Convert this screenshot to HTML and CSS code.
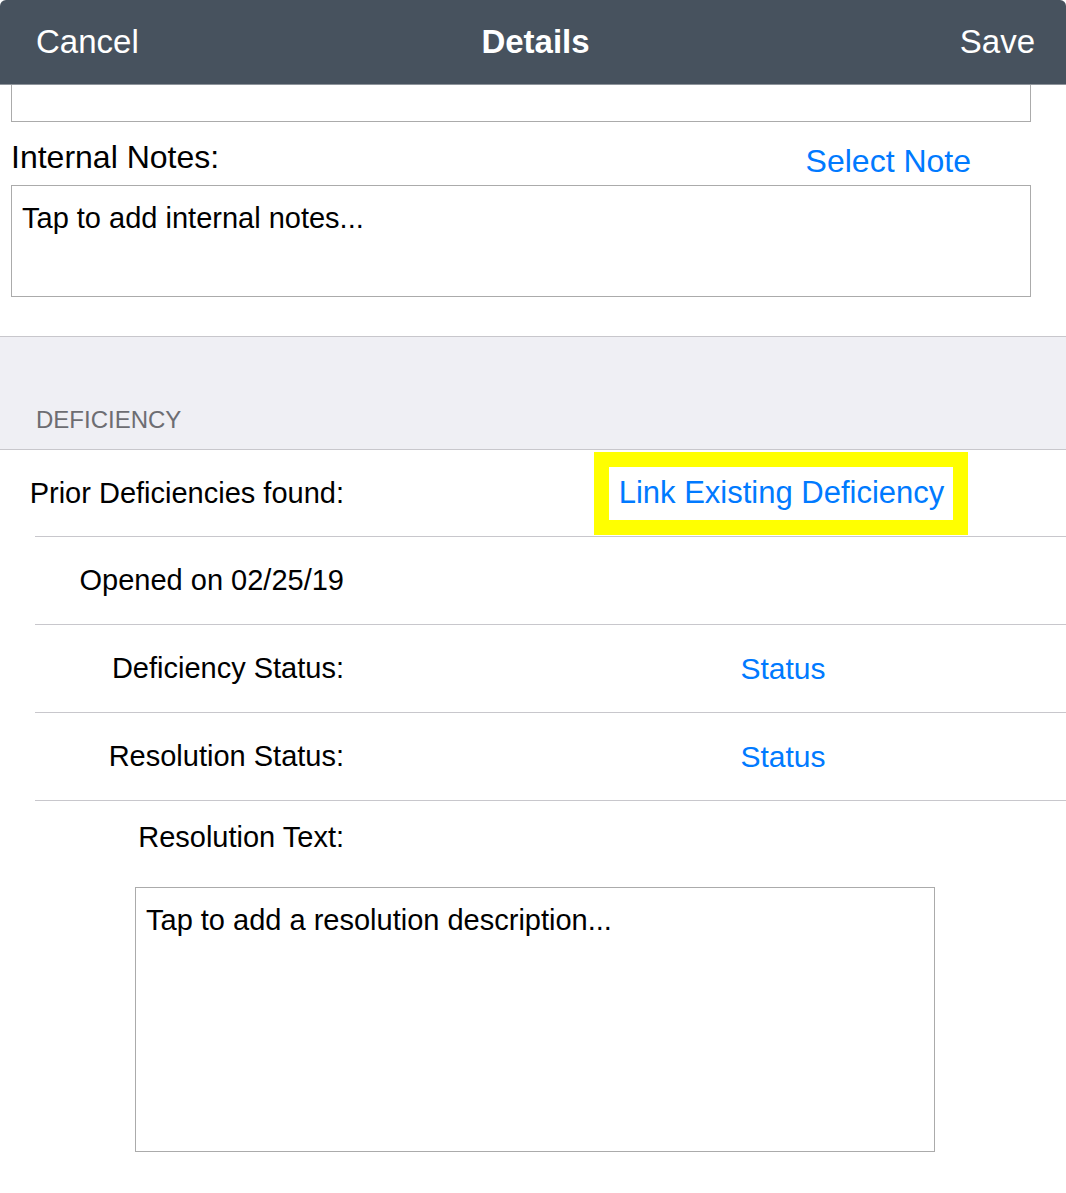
FILE: index.html
```html
<!DOCTYPE html>
<html lang="en">
<head>
    <meta charset="UTF-8">
    <meta name="viewport" content="width=device-width, initial-scale=1.0">
    <title>Details</title>
    <link rel="stylesheet" href="styles.css">
</head>
<body>
    <div class="nav">
        <span class="nav-btn">Cancel</span>
        <span class="nav-title">Details</span>
        <span class="nav-btn save">Save</span>
    </div>

    <div class="form">
        <div class="text-box cut"></div>
        <div class="notes-head">
            <span class="notes-label">Internal Notes:</span>
            <span class="link select-note">Select Note</span>
        </div>
        <div class="text-box notes">Tap to add internal notes...</div>
    </div>

    <div class="section-head">DEFICIENCY</div>

    <div class="row first">
        <span class="label">Prior Deficiencies found:</span>
        <span class="value"><span class="link highlight">Link Existing Deficiency</span></span>
    </div>
    <div class="row">
        <span class="label">Opened on 02/25/19</span>
        <span class="value"></span>
    </div>
    <div class="row">
        <span class="label">Deficiency Status:</span>
        <span class="value"><span class="link">Status</span></span>
    </div>
    <div class="row">
        <span class="label">Resolution Status:</span>
        <span class="value"><span class="link">Status</span></span>
    </div>

    <div class="resolution">
        <div class="res-label">Resolution Text:</div>
        <div class="text-box res-box">Tap to add a resolution description...</div>
    </div>
</body>
</html>
```

FILE: styles.css
```css
body {
    margin: 0;
    font-family: "Liberation Sans", Arial, sans-serif;
    background-color: #ffffff;
    color: #000;
    overflow: hidden;
}
.nav {
    display: grid;
    grid-template-columns: 1fr auto 1fr;
    align-items: center;
    height: 84px;
    padding: 0 31px 0 36px;
    background-color: #47525e;
    border-bottom: 1px solid #8e949b;
    border-radius: 6px 6px 0 0;
    color: #fff;
    font-size: 33px;
}
.nav-title {
    font-weight: bold;
}
.save {
    justify-self: end;
}
.form {
    padding: 0 35px 0 11px;
}
.text-box {
    border: 1px solid #ababab;
    font-size: 29px;
    line-height: 34px;
    padding: 15px 10px;
    box-sizing: border-box;
}
.cut {
    height: 37px;
    border-top: none;
}
.notes-head {
    display: flex;
    justify-content: space-between;
    align-items: flex-start;
    height: 63px;
}
.notes-label {
    margin-top: 19px;
    font-size: 32px;
    line-height: 32px;
}
.select-note {
    margin-top: 23px;
    margin-right: 60px;
    font-size: 32px;
    line-height: 32px;
}
.notes {
    height: 112px;
}
.link {
    color: #007aff;
}
.section-head {
    display: flex;
    align-items: flex-end;
    height: 97px;
    margin-top: 39px;
    padding: 0 0 15px 36px;
    background-color: #efeff4;
    border-top: 1px solid #c8c7cc;
    border-bottom: 1px solid #c8c7cc;
    color: #6d6d72;
    font-size: 24px;
    line-height: 28px;
}
.row {
    display: grid;
    grid-template-columns: 309px 1fr;
    column-gap: 156px;
    align-items: center;
    height: 87px;
    margin-left: 35px;
    border-bottom: 1px solid #c8c7cc;
    font-size: 29px;
}
.row.first {
    height: 86px;
}
.label {
    justify-self: end;
    white-space: nowrap;
}
.value {
    justify-self: center;
    font-size: 30px;
}
.highlight {
    display: inline-block;
    margin-right: 4px;
    border: 15px solid #ffff00;
    padding: 9px 9px 10px 10px;
    font-size: 31px;
    line-height: 34px;
}
.resolution {
    padding-bottom: 40px;
}
.res-label {
    width: 344px;
    padding-top: 20px;
    text-align: right;
    font-size: 29px;
    line-height: 32px;
}
.res-box {
    width: 800px;
    height: 265px;
    margin: 34px 0 0 135px;
}
```
